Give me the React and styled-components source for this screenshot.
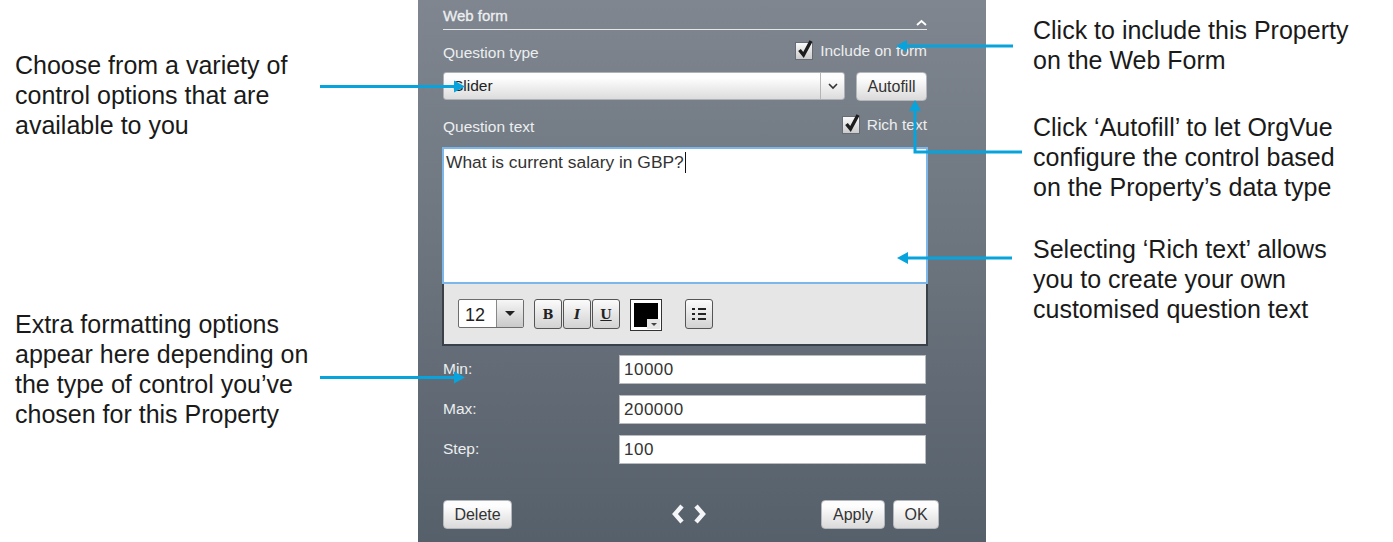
import styled, { createGlobalStyle } from 'styled-components'

const Global = createGlobalStyle`
  html, body { margin: 0; padding: 0; background: #fff; }
  body { font-family: "Liberation Sans", Arial, sans-serif; }
`

const Page = styled.div`
  position: relative;
  width: 1393px;
  height: 542px;
  display: flex;
  overflow: hidden;
  background: #fff;
`
const LeftCol = styled.div`
  width: 418px;
  box-sizing: border-box;
  padding: 50px 0 0 15px;
  display: flex;
  flex-direction: column;
`
const RightCol = styled.div`
  flex: 1;
  box-sizing: border-box;
  padding: 15px 0 0 47px;
  display: flex;
  flex-direction: column;
`
const Note = styled.p`
  margin: ${p => p.$mt || 0}px 0 0;
  font-size: 25px;
  line-height: 30px;
  color: #1a1a1a;
  white-space: pre-line;
`
const Panel = styled.div`
  width: 568px;
  height: 542px;
  box-sizing: border-box;
  padding: 0 58px 0 24px;
  background: linear-gradient(#7f868f, #56606a);
  color: #eceef0;
  font-size: 15.5px;
  display: flex;
  flex-direction: column;
`
const TitleBar = styled.div`
  margin-left: 1px;
  width: 484px;
  height: 21px;
  padding-top: 8px;
  border-bottom: 1px solid #e4e6e8;
  display: flex;
  justify-content: space-between;
  font-size: 15px;
  line-height: 16px;
  -webkit-text-stroke: 0.3px #f0f1f2;
`
const Caret = styled.svg`
  width: 11px;
  height: 7px;
  margin-top: 11px;
`
const LabelRow = styled.div`
  height: ${p => p.$h}px;
  width: 484px;
  margin-left: 1px;
  display: flex;
  justify-content: space-between;
  align-items: flex-end;
  line-height: 18px;
`
const Check = styled.label`
  display: flex;
  align-items: center;
  gap: 7px;
  transform: translateY(-2px);
`
const Box = styled.span`
  position: relative;
  width: 16px;
  height: 16px;
  border: 1px solid #666c73;
  background: linear-gradient(#fafafa, #cbcbcb);
  display: block;
`
const Tick = styled.svg`
  position: absolute;
  left: 0;
  top: -6px;
  width: 18px;
  height: 22px;
`
const SelectRow = styled.div`
  margin: 10px 0 0 1px;
  display: flex;
  gap: 11px;
`
const Select = styled.div`
  width: 402px;
  height: 28px;
  box-sizing: border-box;
  display: flex;
  border-radius: 3px;
  border: 1px solid #aeb2b6;
  background: linear-gradient(#fdfdfd 20%, #dcdcdc);
  color: #222;
  line-height: 26px;
`
const SelectText = styled.span`
  flex: 1;
  padding-left: 9px;
`
const SelectArrow = styled.span`
  width: 23px;
  border-left: 1px solid #b5b5b5;
  display: flex;
  align-items: center;
  justify-content: center;
`
const Btn = styled.button`
  width: ${p => p.$w}px;
  height: 29px;
  padding: 0;
  box-sizing: border-box;
  border-radius: 4px;
  border: 1px solid #b4b8bc;
  background: linear-gradient(#fdfdfd 20%, #dadada);
  color: #333;
  font: 16px "Liberation Sans", Arial, sans-serif;
`
const Editor = styled.div`
  height: 137px;
  width: 486px;
  margin-top: 11px;
  box-sizing: border-box;
  border: 2px solid #7db6e8;
  background: #fff;
  color: #333;
  font-size: 17.4px;
  line-height: 20px;
  padding: 3px 2px;
`
const Cursor = styled.span`
  display: inline-block;
  width: 1px;
  height: 21px;
  background: #111;
  vertical-align: top;
  margin-left: 1px;
`
const Toolbar = styled.div`
  height: 62px;
  width: 486px;
  box-sizing: border-box;
  background: #e6e6e6;
  border: 2px solid #3a4149;
  border-top: none;
  padding: 15px 0 0 14px;
  display: flex;
  align-items: flex-start;
`
const SizeBox = styled.div`
  width: 66px;
  height: 29px;
  box-sizing: border-box;
  border: 1px solid #6d6d6d;
  border-radius: 2px;
  background: #fff;
  display: flex;
  font-size: 18px;
  line-height: 30px;
  color: #222;
`
const SizeValue = styled.span`
  flex: 1;
  padding-left: 6px;
`
const SizeArrow = styled.span`
  width: 26px;
  border-left: 1px solid #888;
  background: linear-gradient(#f6f6f6, #c9c9c9);
  display: flex;
  align-items: center;
  justify-content: center;
`
const Tri = styled.span`
  width: 0;
  height: 0;
  border-left: ${p => p.$s}px solid transparent;
  border-right: ${p => p.$s}px solid transparent;
  border-top: ${p => p.$s}px solid ${p => p.$c || '#222'};
`
const Group = styled.div`
  display: flex;
  gap: 1px;
  margin-left: 10px;
`
const ToolBtn = styled.button`
  width: 28px;
  height: 30px;
  padding: 0;
  box-sizing: border-box;
  border: 1px solid #555;
  border-radius: 3px;
  background: linear-gradient(#fbfbfb, #d2d2d2);
  color: #222;
  margin-left: ${p => p.$ml || 0}px;
  font: ${p => (p.$i ? 'italic ' : '')}bold 13px "DejaVu Serif", serif;
  text-decoration: ${p => (p.$u ? 'underline' : 'none')};
  display: flex;
  align-items: center;
  justify-content: center;
`
const Swatch = styled.div`
  position: relative;
  width: 32px;
  height: 32px;
  margin-left: 10px;
  box-sizing: border-box;
  border: 1px solid #333;
  background: #fff;
  padding: 3px;
`
const SwatchFill = styled.div`
  width: 100%;
  height: 100%;
  background: #000;
`
const SwatchCorner = styled.div`
  position: absolute;
  right: 1px;
  bottom: 1px;
  width: 13px;
  height: 10px;
  background: #e6e6e6;
  display: flex;
  align-items: center;
  justify-content: center;
`
const Fields = styled.div`
  margin-top: 9px;
  display: flex;
  flex-direction: column;
  gap: 11px;
`
const Field = styled.div`
  display: flex;
  align-items: center;
  height: 29px;
  margin-left: 1px;
`
const FieldLabel = styled.span`
  width: 176px;
  transform: translateY(-1px);
`
const FieldInput = styled.div`
  width: 307px;
  height: 29px;
  box-sizing: border-box;
  background: #fff;
  border: 1px solid #b9bcbf;
  color: #333;
  font-size: 17px;
  line-height: 27px;
  padding-left: 4px;
  letter-spacing: 0.5px;
`
const Footer = styled.div`
  margin: 36px -11px 0 1px;
  display: flex;
  align-items: center;
`
const Nav = styled.div`
  margin-left: 159px;
  width: 150px;
  display: flex;
  gap: 8px;
  transform: translateY(-1px);
`
const NavIcon = styled.svg`
  width: 14px;
  height: 20px;
`
const Right = styled.div`
  margin-left: auto;
  display: flex;
  gap: 8px;
`
const Arrows = styled.svg`
  position: absolute;
  left: 0;
  top: 0;
  pointer-events: none;
`

const Chev = ({ d }) => (
  <NavIcon viewBox="0 0 14 20">
    <path d={d} fill="none" stroke="#f4f5f6" strokeWidth="4.4" />
  </NavIcon>
)

const CheckBox = ({ children }) => (
  <Check>
    <Box>
      <Tick viewBox="0 0 18 22">
        <path d="M3.5 13l4 5L15 4" fill="none" stroke="#1d1d1d" strokeWidth="3.4" />
      </Tick>
    </Box>
    {children}
  </Check>
)

const BLUE = '#06a3dc'

const App = () => (
  <Page>
    <Global />
    <LeftCol>
      <Note>{'Choose from a variety of\ncontrol options that are\navailable to you'}</Note>
      <Note $mt={169}>{'Extra formatting options\nappear here depending on\nthe type of control you’ve\nchosen for this Property'}</Note>
    </LeftCol>
    <Panel>
      <TitleBar>
        <span>Web form</span>
        <Caret viewBox="0 0 11 7">
          <path d="M1 6l4.5-4L10 6" fill="none" stroke="#fff" strokeWidth="1.8" />
        </Caret>
      </TitleBar>
      <LabelRow $h={32}>
        <span>Question type</span>
        <CheckBox>Include on form</CheckBox>
      </LabelRow>
      <SelectRow>
        <Select>
          <SelectText>Slider</SelectText>
          <SelectArrow>
            <svg width="10" height="7" viewBox="0 0 10 7">
              <path d="M1 1l4 4 4-4" fill="none" stroke="#333" strokeWidth="1.6" />
            </svg>
          </SelectArrow>
        </Select>
        <Btn $w={71}>Autofill</Btn>
      </SelectRow>
      <LabelRow $h={35}>
        <span>Question text</span>
        <CheckBox>Rich text</CheckBox>
      </LabelRow>
      <Editor>What is current salary in GBP?<Cursor /></Editor>
      <Toolbar>
        <SizeBox>
          <SizeValue>12</SizeValue>
          <SizeArrow><Tri $s={5} /></SizeArrow>
        </SizeBox>
        <Group>
          <ToolBtn>B</ToolBtn>
          <ToolBtn $i>I</ToolBtn>
          <ToolBtn $u>U</ToolBtn>
        </Group>
        <Swatch>
          <SwatchFill />
          <SwatchCorner><Tri $s={3} $c="#444" /></SwatchCorner>
        </Swatch>
        <ToolBtn $ml={23}>
          <svg width="16" height="14" viewBox="0 0 16 14">
            <path d="M1 2h3M7 2h8M1 7h3M7 7h8M1 12h3M7 12h8" stroke="#222" strokeWidth="2" />
          </svg>
        </ToolBtn>
      </Toolbar>
      <Fields>
        <Field><FieldLabel>Min:</FieldLabel><FieldInput>10000</FieldInput></Field>
        <Field><FieldLabel>Max:</FieldLabel><FieldInput>200000</FieldInput></Field>
        <Field><FieldLabel>Step:</FieldLabel><FieldInput>100</FieldInput></Field>
      </Fields>
      <Footer>
        <Btn $w={69}>Delete</Btn>
        <Nav>
          <Chev d="M11 2L4 10l7 8" />
          <Chev d="M3 2l7 8-7 8" />
        </Nav>
        <Right>
          <Btn $w={64}>Apply</Btn>
          <Btn $w={46}>OK</Btn>
        </Right>
      </Footer>
    </Panel>
    <RightCol>
      <Note>{'Click to include this Property\non the Web Form'}</Note>
      <Note $mt={37}>{'Click ‘Autofill’ to let OrgVue\nconfigure the control based\non the Property’s data type'}</Note>
      <Note $mt={32}>{'Selecting ‘Rich text’ allows\nyou to create your own\ncustomised question text'}</Note>
    </RightCol>
    <Arrows width="1393" height="542" viewBox="0 0 1393 542">
      <g stroke={BLUE} strokeWidth="3" fill="none">
        <path d="M320 86.5H456" />
        <path d="M320 377.5H456" />
        <path d="M1013 46H906" />
        <path d="M1022 152H915V110" />
        <path d="M1012 258H906" />
      </g>
      <g fill={BLUE}>
        <path d="M465 86.5l-11-6v12z" />
        <path d="M465 377.5l-11-6v12z" />
        <path d="M896 46l11-6v12z" />
        <path d="M915 100l-6 11h12z" />
        <path d="M897 258l11-6v12z" />
      </g>
    </Arrows>
  </Page>
)

export default App
